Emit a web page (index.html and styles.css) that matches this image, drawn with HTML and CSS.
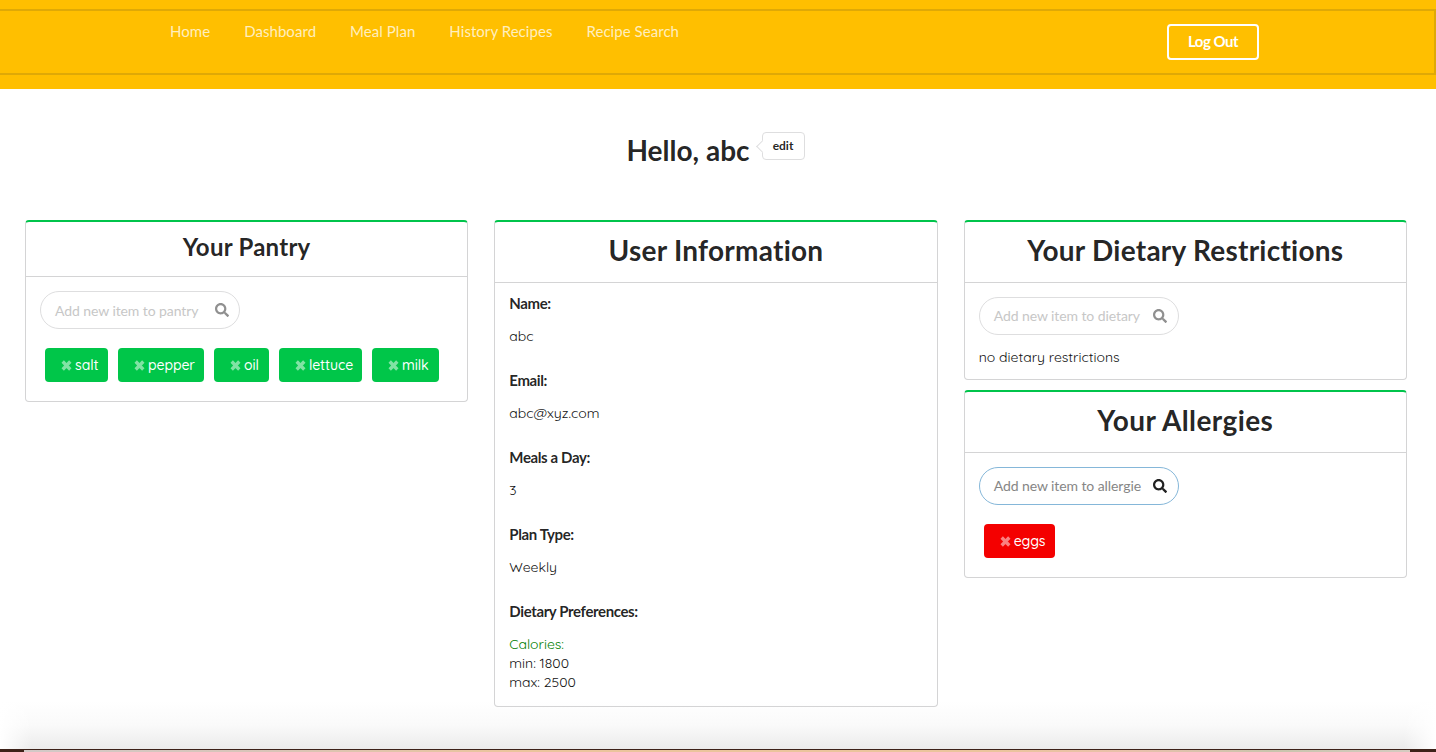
FILE: index.html
```html
<!DOCTYPE html>
<html lang="en">
<head>
<meta charset="utf-8">
<title>Dashboard</title>
<link rel="stylesheet" href="styles.css">
</head>
<body>
<svg class="defs" aria-hidden="true">
  <symbol id="times" viewBox="0 0 11 11"><path d="M1.700 1.500 9.300 9.500M9.300 1.500 1.700 9.500" fill="none" stroke="currentColor" stroke-width="3.300"/></symbol>
  <symbol id="search" viewBox="0 0 512 512"><path fill="currentColor" d="M505 442.700 405.300 343c-4.500-4.500-10.600-7-17-7H372c27.600-35.300 44-79.700 44-128C416 93.100 322.900 0 208 0S0 93.100 0 208s93.100 208 208 208c48.300 0 92.700-16.400 128-44v16.300c0 6.400 2.500 12.500 7 17l99.700 99.700c9.400 9.400 24.600 9.400 33.900 0l28.300-28.300c9.400-9.400 9.400-24.600.1-34zM208 336c-70.700 0-128-57.200-128-128 0-70.700 57.200-128 128-128 70.700 0 128 57.200 128 128 0 70.700-57.200 128-128 128z"/></symbol>
</svg>
<div class="page">
  <header class="banner">
    <nav class="menu">
      <div class="links">
        <a>Home</a><a>Dashboard</a><a>Meal Plan</a><a>History Recipes</a><a>Recipe Search</a>
      </div>
      <button class="logout">Log Out</button>
    </nav>
  </header>
  <div class="greeting"><h1>Hello, abc</h1><span class="edit">edit</span></div>
  <main class="columns">
    <section class="card pantry">
      <h2 class="title small">Your Pantry</h2>
      <div class="body">
        <div class="search"><span>Add new item to pantry</span><svg><use href="#search"/></svg></div>
        <div class="chips">
          <span class="chip salt"><svg><use href="#times"/></svg>salt</span>
          <span class="chip pepper"><svg><use href="#times"/></svg>pepper</span>
          <span class="chip oil"><svg><use href="#times"/></svg>oil</span>
          <span class="chip lettuce"><svg><use href="#times"/></svg>lettuce</span>
          <span class="chip milk"><svg><use href="#times"/></svg>milk</span>
        </div>
      </div>
    </section>
    <section class="card user">
      <h2 class="title">User Information</h2>
      <dl class="info">
        <dt>Name:</dt><dd>abc</dd>
        <dt>Email:</dt><dd>abc@xyz.com</dd>
        <dt>Meals a Day:</dt><dd>3</dd>
        <dt>Plan Type:</dt><dd>Weekly</dd>
        <dt>Dietary Preferences:</dt><dd><span class="calories">Calories:</span><br>min: 1800<br>max: 2500</dd>
      </dl>
    </section>
    <div class="stack">
      <section class="card dietary">
        <h2 class="title">Your Dietary Restrictions</h2>
        <div class="body">
          <div class="search"><span>Add new item to dietary</span><svg><use href="#search"/></svg></div>
          <p class="none">no dietary restrictions</p>
        </div>
      </section>
      <section class="card allergies">
        <h2 class="title">Your Allergies</h2>
        <div class="body">
          <div class="search focus"><span>Add new item to allergie</span><svg><use href="#search"/></svg></div>
          <div class="chips"><span class="chip red eggs"><svg><use href="#times"/></svg>eggs</span></div>
        </div>
      </section>
    </div>
  </main>
  <div class="shade"></div>
  <div class="edge"></div>
</div>
</body>
</html>
```
FILE: styles.css
```css
* { box-sizing: border-box; }
body { margin: 0; background: #fff; color: rgba(0,0,0,.87); font: 14px/18px Lato, sans-serif; }
h1, h2, p, dl, dd { margin: 0; }
.defs { display: none; }
.page { position: relative; height: 752px; overflow: hidden; }
.banner { height: 89px; padding-top: 9px; background: #ffbf00; }
.menu { display: flex; justify-content: space-between; height: 66px; padding: 13px 175px 0 170px; border: 2px solid #dfa906; border-left: 0; }
.links { display: flex; gap: 34px; height: 14px; line-height: 14px; font-size: 15px; letter-spacing: .05px; color: rgba(255,255,255,.75); white-space: nowrap; }
.logout { width: 92px; height: 36px; border: 2px solid #fff; border-radius: 4px; background: none; color: #fff; font: bold 15px/18px Lato, sans-serif; letter-spacing: -.5px; padding: 0 0 2px; }
.greeting { display: flex; justify-content: center; height: 131px; padding: 43px 5px 0 0; }
.greeting h1 { font-size: 28px; line-height: 36px; }
.edit { position: relative; width: 43px; height: 28px; margin-left: 12px; border: 1px solid #dededf; border-radius: 4px; text-align: center; font: bold 12px/26px Lato, sans-serif; }
.edit::before { content: ""; position: absolute; left: -5px; top: 9px; width: 8px; height: 8px; background: #fff; border: solid #dededf; border-width: 0 0 1px 1px; transform: rotate(45deg); }
.columns { display: grid; grid-template-columns: repeat(3, 1fr); gap: 26px; align-items: start; padding: 0 29px 0 25px; }
.card { border: 1px solid #d4d4d5; border-top: 2px solid #00c44b; border-radius: 4px; }
.pantry { height: 182px; }
.user { height: 487px; }
.dietary { height: 160px; }
.allergies { height: 188px; }
.stack { display: flex; flex-direction: column; gap: 10px; }
.title { height: 61px; border-bottom: 1px solid #d4d4d5; text-align: center; font-size: 28px; line-height: 57px; letter-spacing: .25px; }
.allergies .title { letter-spacing: .4px; }
.title.small { height: 55px; font-size: 24px; line-height: 50px; }
.body { padding: 14px; }
.search { display: flex; align-items: center; justify-content: space-between; width: 200px; height: 38px; padding: 0 10px 0 14px; border: 1px solid #dededf; border-radius: 19px; color: #c7c7c7; white-space: nowrap; letter-spacing: -.08px; }
.pantry .search span { padding-top: 1px; }
.stack .search { padding-right: 11px; }
.search svg { width: 14px; height: 14px; color: #909090; }
.search.focus { border-color: #85b7d9; color: #868686; }
.search.focus svg { color: #212121; }
.chips { display: flex; gap: 10px; padding: 19px 5px 0; }
.chip { display: flex; align-items: center; gap: 3px; height: 34px; padding-left: 16px; border-radius: 4px; background: #00c649; color: #fff; white-space: nowrap; font-family: Quicksand, Lato, sans-serif; font-size: 14px; font-weight: 500; letter-spacing: -.1px; }
.chip svg { width: 11px; height: 11px; color: rgba(255,255,255,.5); flex: none; }
.salt { width: 63px; }
.pepper { width: 86px; }
.oil { width: 55px; }
.lettuce { width: 83px; }
.milk { width: 67px; }
.eggs { width: 71px; }
.chip.red { background: #f40000; }
.info { padding: 11px 14px; }
.info dt { font-size: 15px; font-weight: bold; letter-spacing: -.38px; }
.info dd { margin: 15px 0 25px; line-height: 19px; font-family: Quicksand, Lato, sans-serif; color: #111; }
.calories { color: green; }
.none { padding-top: 13px; font-family: Quicksand, Lato, sans-serif; color: #111; }
.shade { position: absolute; left: 0; right: 0; bottom: 3px; height: 48px; background: linear-gradient(90deg, #fff, transparent 32px calc(100% - 32px), #fff), linear-gradient(#fff, #fafafa 50%, #ebebeb); z-index: -1; }
.edge { position: absolute; left: 0; right: 0; bottom: 0; height: 3px; border: solid #3d2219; border-width: 1px 26px 0 24px; background: linear-gradient(90deg, #d2c9c7, #d9c4b7 18%, #ebc49c 35% 70%, #e9c0ab 80%, #c9c4ac 90%, #d5cbc0); }
```
